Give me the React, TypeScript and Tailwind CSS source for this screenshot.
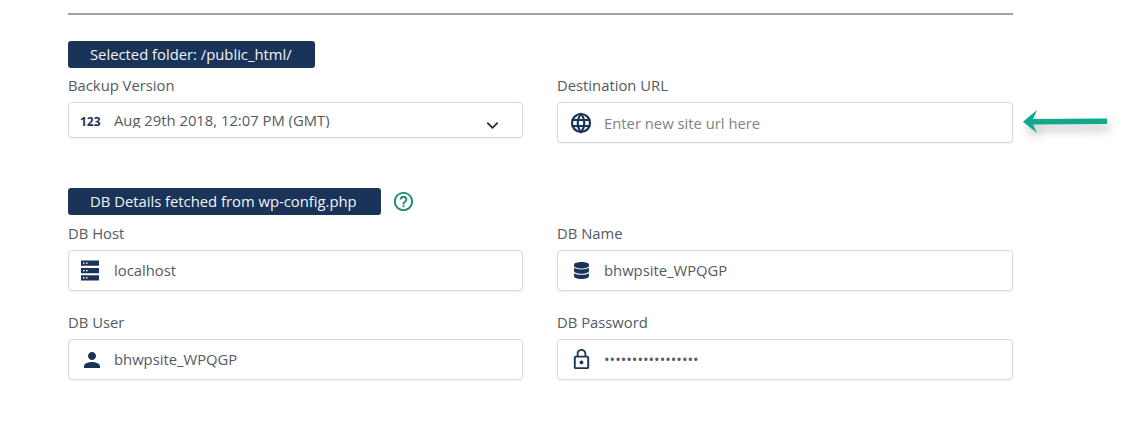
import type { ReactNode } from "react";
import { ChevronDown } from "lucide-react";
import { FaDatabase } from "react-icons/fa";
import { MdHelpOutline, MdLockOutline, MdPerson } from "react-icons/md";
import { TbWorld } from "react-icons/tb";

const navy = "#1a3358";

function ServerIcon() {
  return (
    <svg className="-ml-[3px]" width="20" height="21" viewBox="0 0 20 21" fill={navy}>
      <path d="M1 0.5h18v5.2H1zM1 8h18v5.2H1zM1 15.3h18v5.2H1z" />
      <path
        d="M3 2.4h1.6v1.4H3zM6 2.4h1.6v1.4H6zM3 9.9h1.6v1.4H3zM6 9.9h1.6v1.4H6zM3 17.2h1.6v1.4H3zM6 17.2h1.6v1.4H6z"
        fill="#fff"
      />
    </svg>
  );
}

function Badge({ children, width }: { children: ReactNode; width: string }) {
  return (
    <div
      className={`flex h-[27px] items-center rounded-[3px] bg-[#1a3358] pl-[22px] text-[14.8px] leading-none text-[#f2f4f7] ${width}`}
    >
      {children}
    </div>
  );
}

function Field({
  label,
  icon,
  value,
  muted,
  left,
  labelClass = "h-[28px] leading-[22px]",
}: {
  label: string;
  icon: ReactNode;
  value: string;
  muted?: boolean;
  left?: boolean;
  labelClass?: string;
}) {
  return (
    <div className="flex flex-col">
      <div className={`text-[14.8px] text-[#555a61] ${labelClass}`}>{label}</div>
      <div className="flex h-[41px] items-center rounded-[4px] border border-[#d9d9d9] bg-white shadow-[0_1px_2px_rgba(0,0,0,0.06)]">
        <span className={`flex shrink-0 justify-center ${left ? "w-[45px]" : "w-[46px]"}`}>{icon}</span>
        <span className={`text-[14.8px] ${muted ? "mt-[1px] text-[#85807f]" : "text-[#555a61]"}`}>{value}</span>
      </div>
    </div>
  );
}

export default function App() {
  return (
    <div
      className="h-[425px] w-[1142px] overflow-hidden bg-white pl-[68px] pt-[13px]"
      style={{ fontFamily: '"Open Sans", sans-serif' }}
    >
      <div className="w-[945px]">
        <div className="h-[2px] bg-[#a3a3a3]" />

        <div className="mt-[26px]">
          <Badge width="w-[247px]">Selected folder: /public_html/</Badge>
        </div>

        <div className="mt-[7px] grid grid-cols-[455px_456px] gap-x-[34px]">
          <div className="flex flex-col">
            <div className="h-[27px] text-[14.8px] leading-[21px] text-[#555a61]">Backup Version</div>
            <div className="flex h-[36px] items-center rounded-[4px] border border-[#d9d9d9] bg-white pr-[20px] shadow-[0_1px_2px_rgba(0,0,0,0.06)]">
              <span className="mt-[4px] w-[45px] shrink-0 pl-[11px] text-[12px] font-bold leading-none text-[#1a3358]">
                123
              </span>
              <span className="-mt-[2px] h-[17px] overflow-hidden text-[14.8px] leading-[19px] text-[#555a61]">
                Aug 29th 2018, 12:07 PM (GMT)
              </span>
              <ChevronDown size={19} strokeWidth={2.2} color="#1f2a3a" className="ml-auto mt-[11px]" />
            </div>
          </div>

          <div className="relative">
            <Field
              label="Destination URL"
              icon={<TbWorld size={24} strokeWidth={2.2} color={navy} />}
              value="Enter new site url here"
              muted
              labelClass="h-[27px] leading-[21px]"
            />
            <svg
              className="absolute left-[463px] top-[34px] overflow-visible drop-shadow-[3px_6px_5px_rgba(0,0,0,0.25)]"
              width="90"
              height="26"
              viewBox="0 0 90 26"
            >
              <path d="M3 12.7 L17 1 L13 10 L87 9.5 L87 15 L13 15.5 L17 24 Z" fill="#11a98b" />
            </svg>
          </div>
        </div>

        <div className="mt-[45px] flex items-center gap-[11px]">
          <Badge width="w-[313px]">DB Details fetched from wp-config.php</Badge>
          <MdHelpOutline size={23} color="#1b8a78" />
        </div>

        <div className="mt-[7px] grid grid-cols-[455px_456px] gap-x-[34px] gap-y-[20px]">
          <Field left label="DB Host" icon={<ServerIcon />} value="localhost" />
          <Field label="DB Name" icon={<FaDatabase size={17} color={navy} />} value="bhwpsite_WPQGP" />
          <Field left label="DB User" icon={<MdPerson size={24} color={navy} />} value="bhwpsite_WPQGP" />
          <Field
            label="DB Password"
            icon={<MdLockOutline size={23} color={navy} />}
            value="•••••••••••••••••"
          />
        </div>
      </div>
    </div>
  );
}
